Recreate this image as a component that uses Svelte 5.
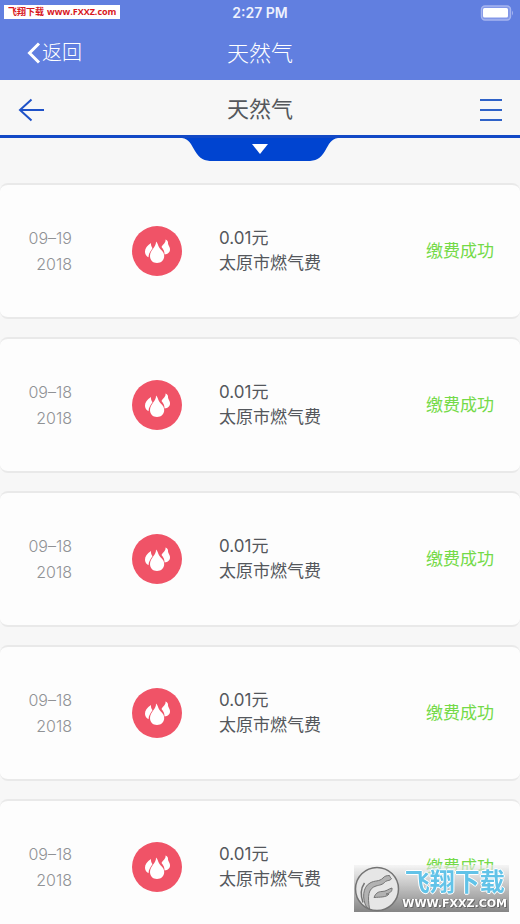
<script>
  const payments = [
    { day: '09–19', year: '2018', amount: '0.01元', name: '太原市燃气费', status: '缴费成功' },
    { day: '09–18', year: '2018', amount: '0.01元', name: '太原市燃气费', status: '缴费成功' },
    { day: '09–18', year: '2018', amount: '0.01元', name: '太原市燃气费', status: '缴费成功' },
    { day: '09–18', year: '2018', amount: '0.01元', name: '太原市燃气费', status: '缴费成功' },
    { day: '09–18', year: '2018', amount: '0.01元', name: '太原市燃气费', status: '缴费成功' }
  ]
</script>

<div class="page">
  <div class="native-bar">
    <div class="status-bar">
      <span class="clock">2:27 PM</span>
      <svg class="battery" width="34" height="16" viewBox="0 0 34 16" aria-hidden="true">
        <rect x="1.5" y="1" width="29" height="14" rx="3.5" fill="#8297e8" stroke="#a6b5ef" stroke-width="1.4" />
        <rect x="3" y="3" width="25" height="9.5" rx="1.5" fill="#fff" />
        <path d="M32 5.5q2 2.5 0 5z" fill="#a6b5ef" />
      </svg>
    </div>
    <div class="nav-bar">
      <a href="#back" class="nav-back">
        <svg width="14" height="22" viewBox="0 0 14 22" aria-hidden="true">
          <path d="M12 1.5 2.5 11l9.500 9.500" fill="none" stroke="#fff" stroke-width="3" />
        </svg>
        <span>返回</span>
      </a>
      <span class="nav-title">天然气</span>
    </div>
  </div>

  <header class="app-bar">
    <a href="#home" class="app-back" aria-label="返回">
      <svg width="26" height="24" viewBox="0 0 26 24" aria-hidden="true">
        <path d="M13.500 1.500 2 12l11.500 10.500M2 12H26" fill="none" stroke="#1f52c8" stroke-width="2" />
      </svg>
    </a>
    <h1>天然气</h1>
    <button class="menu" aria-label="菜单">
      <svg width="22" height="22" viewBox="0 0 22 22" aria-hidden="true">
        <path d="M0 1h22M0 11h22M0 21h22" stroke="#2f62c8" stroke-width="2" />
      </svg>
    </button>
  </header>

  <div class="filter">
    <button class="filter-tab" aria-label="筛选">
      <svg width="156" height="24" viewBox="0 0 156 24" aria-hidden="true">
        <path d="M0 0h156C149 1 147 6 143 13C138 21 134 23 125 23H31C22 23 18 21 13 13C9 6 7 1 0 0z" fill="#0044d0" />
        <path d="M70 6h16l-8 10z" fill="#fff" />
      </svg>
    </button>
  </div>

  <ul class="payments">
    {#each payments as item}
      <li class="payment">
        <div class="date">
          <span>{item.day}</span>
          <span>{item.year}</span>
        </div>
        <svg class="gas" width="50" height="50" viewBox="0 0 50 50" aria-hidden="true">
          <circle cx="25" cy="25" r="25" fill="#f05367" />
          <path d="M19 17C15 19.500 12.800 22.500 13 26c.2 2.600 1.500 4.300 3.500 5.200.2-4 2-6 4-9-1.200-1.600-1.700-3.200-1.500-5.200z" fill="#fff" />
          <path d="M33.500 13.500c.5 3.500-2.500 4.500-4 7.500 2 2.500 3.200 4.500 3 7.500 3.500-.5 5.700-2.300 5.500-5.500-.2-3-2.200-3.500-2-6.500 0-1.300-1-2.500-2.500-3z" fill="#fff" />
          <path d="M24 15.500c.5 5.500-6 8.500-6 14.500 0 4.200 2.800 7 7 7s7.200-2.800 7.200-7c0-4.500-3.200-5.500-5-8.500-1.200-2-1.500-4.500-3.200-6z" fill="#fff" />
        </svg>
        <div class="detail">
          <span>{item.amount}</span>
          <span>{item.name}</span>
        </div>
        <span class="status">{item.status}</span>
      </li>
    {/each}
  </ul>

  <div class="site-tag">
    <span>飞翔下载</span>
    <span>www.FXXZ.com</span>
  </div>

  <div class="watermark">
    <svg width="46" height="46" viewBox="0 0 46 46" aria-hidden="true">
      <circle cx="23" cy="23" r="21.500" fill="#e6e6e6" stroke="#747474" stroke-width="1.500" />
      <path d="M12.500 41C8 33 8.500 21 16 17c5-3 9-1 13-5 1.500-2 4-2.500 6.500-2.500.5 1 .5 2 2 3-1 2.500-4 1.500-6 3-3 3.500-6 3.500-9.500 4.500C14 22.500 13.500 30 15.500 43z" fill="#b2b2b2" stroke="#747474" />
      <path d="M9 36.500C6 28 7 22 10.500 17" fill="none" stroke="#747474" stroke-width="1.500" />
      <path d="M20 31.500c1.500-4 4-6 8-6 4.500 0 6-2.500 10-3.500.5 4-3 5.500-6 6 1 .2 2 .2 3 0-2.500 3.500-9 3-15 3.500z" fill="#b2b2b2" stroke="#747474" />
    </svg>
    <div class="watermark-text">
      <span class="watermark-name">飞翔下载</span>
      <span class="watermark-url">WWW.FXXZ.COM</span>
    </div>
  </div>
</div>

<style>
  :global(body) {
    margin: 0;
    background: #f7f7f7;
  }

  .page {
    position: relative;
    font-family: Inter, 'Noto Sans CJK SC', sans-serif;
    font-weight: 300;
    color: #54575c;
  }

  a {
    color: inherit;
    text-decoration: none;
  }

  button {
    padding: 0;
    border: none;
    background: none;
    cursor: pointer;
  }

  svg {
    display: block;
    flex: none;
  }

  .native-bar {
    background: #617fe0;
    color: #fff;
  }

  .status-bar,
  .nav-bar,
  .app-bar {
    display: grid;
    grid-template-columns: 1fr auto 1fr;
    align-items: center;
  }

  .status-bar {
    height: 26px;
    padding: 0 6px;
  }

  .clock {
    grid-column: 2;
    font-size: 14px;
    font-weight: 600;
    line-height: 26px;
    color: #eef1fd;
  }

  .battery {
    justify-self: end;
  }

  .nav-bar {
    height: 54px;
    padding: 0 27px;
  }

  .nav-back {
    display: flex;
    align-items: center;
    gap: 1px;
    font-size: 20px;
    line-height: 30px;
  }

  .nav-title {
    font-size: 22px;
    line-height: 30px;
  }

  .app-bar {
    height: 55px;
    padding: 0 18px;
    border-bottom: 3px solid #1249c6;
  }

  .app-back {
    justify-self: start;
    padding-top: 4px;
  }

  .menu {
    justify-self: end;
    padding-top: 4px;
  }

  h1 {
    margin: 0;
    padding-top: 2px;
    font-size: 22px;
    font-weight: 400;
    line-height: 30px;
  }

  .filter {
    display: flex;
    justify-content: center;
    height: 45px;
  }

  .filter-tab {
    align-self: flex-start;
  }

  .payments {
    display: flex;
    flex-direction: column;
    gap: 18px;
    margin: 0;
    padding: 0;
    list-style: none;
  }

  .payment {
    display: flex;
    align-items: center;
    box-sizing: border-box;
    height: 136px;
    padding-right: 26px;
    border: solid #e9e9e9;
    border-width: 2px 0;
    border-radius: 8px;
    background: #fdfdfd;
  }

  .date {
    display: flex;
    flex-direction: column;
    width: 72px;
    font-size: 16px;
    line-height: 26px;
    text-align: right;
    color: #909295;
  }

  .gas {
    margin: 0 37px 0 60px;
  }

  .detail {
    display: flex;
    flex-direction: column;
    font-size: 17px;
    font-weight: 400;
    line-height: 25px;
  }

  .status {
    margin-left: auto;
    font-size: 17px;
    font-weight: 400;
    line-height: 25px;
    color: #74da48;
  }

  .site-tag {
    position: absolute;
    top: 5px;
    left: 4px;
    display: flex;
    gap: 3px;
    padding: 0 4px;
    background: #fff;
    color: #d8161c;
    font-family: 'Open Sans', 'Noto Sans CJK SC', sans-serif;
    font-size: 9px;
    font-weight: 700;
    line-height: 14px;
  }

  .watermark {
    position: fixed;
    right: 11px;
    bottom: 12px;
    display: flex;
    align-items: center;
    gap: 2px;
    height: 47px;
    padding-right: 2px;
    background: linear-gradient(rgba(240, 240, 240, 0.6), #858585);
  }

  .watermark-text {
    display: flex;
    flex-direction: column;
    align-items: center;
  }

  .watermark-name {
    font-size: 25px;
    font-weight: 700;
    line-height: 30px;
    color: #62c3e8;
    text-shadow: 1px 0 #fff, -1px 0 #fff, 0 1px #fff, 0 -1px #fff;
  }

  .watermark-url {
    font-family: 'DejaVu Sans', sans-serif;
    font-size: 11px;
    font-weight: 700;
    line-height: 14px;
    color: #fff;
    text-shadow: 1px 1px #666, -1px 0 #777;
  }
</style>
